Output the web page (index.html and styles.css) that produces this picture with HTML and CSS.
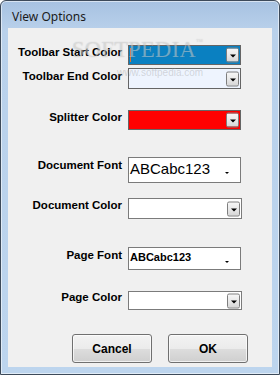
FILE: index.html
```html
<!DOCTYPE html>
<html lang="en">
<head>
  <meta charset="UTF-8">
  <meta name="viewport" content="width=device-width, initial-scale=1.0">
  <title>View Options</title>
  <link rel="stylesheet" href="styles.css">
</head>
<body>
  <div class="window">
    <div class="title">View Options</div>
    <div class="client">
      <div class="row row-1">
        <div class="label">Toolbar Start Color</div>
        <div class="combo color-combo start">
          <span class="caret"></span>
          <span class="drop-btn"><span class="arrow"></span></span>
        </div>
      </div>
      <div class="row row-2">
        <div class="label">Toolbar End Color</div>
        <div class="combo color-combo end">
          <span class="drop-btn"><span class="arrow"></span></span>
        </div>
      </div>
      <div class="row row-3">
        <div class="label">Splitter Color</div>
        <div class="combo color-combo splitter">
          <span class="drop-btn"><span class="arrow"></span></span>
        </div>
      </div>
      <div class="row row-4">
        <div class="label">Document Font</div>
        <div class="combo font-combo doc-font">
          <span class="font-sample">ABCabc123</span>
          <span class="flat-arrow"></span>
        </div>
      </div>
      <div class="row row-5">
        <div class="label">Document Color</div>
        <div class="combo color-combo plain">
          <span class="drop-btn"><span class="arrow"></span></span>
        </div>
      </div>
      <div class="row row-6">
        <div class="label">Page Font</div>
        <div class="combo font-combo page-font">
          <span class="font-sample">ABCabc123</span>
          <span class="flat-arrow"></span>
        </div>
      </div>
      <div class="row row-7">
        <div class="label">Page Color</div>
        <div class="combo color-combo plain short">
          <span class="drop-btn"><span class="arrow"></span></span>
        </div>
      </div>

      <div class="buttons">
        <button class="btn">Cancel</button>
        <button class="btn">OK</button>
      </div>

      <div class="watermark">SOFTPEDIA<span class="tm">™</span></div>
      <div class="watermark-url">www.softpedia.com</div>
    </div>
  </div>
</body>
</html>
```

FILE: styles.css
```css
body {
  margin: 0;
  background-color: #ffffff;
  font-family: "Liberation Sans", Arial, sans-serif;
}
.window {
  width: 280px;
  height: 375px;
  box-sizing: border-box;
  border: 1px solid #3d4a5a;
  border-radius: 6px 6px 0 0;
  padding: 0 7px 7px 7px;
  background: linear-gradient(to bottom, #a7c2e1 0px, #b9d1eb 30px, #bdd5ee 100%);
  box-shadow: inset 0 0 0 1px rgba(255, 255, 255, 0.55);
  display: flex;
  flex-direction: column;
}
.title {
  height: 27px;
  line-height: 32px;
  padding-left: 4px;
  font-family: "Noto Sans", "Open Sans", sans-serif;
  font-size: 12px;
  color: #1b1b1b;
}
.client {
  position: relative;
  flex: 1;
  background-color: #f0f0f0;
  padding-top: 17px;
  display: flex;
  flex-direction: column;
}
.row {
  display: flex;
  align-items: flex-start;
}
.row-2 { margin-top: 3px; }
.row-3 { margin-top: 21px; }
.row-4 { margin-top: 27px; }
.row-5 { margin-top: 15px; }
.row-6 { margin-top: 28px; }
.row-7 { margin-top: 21px; }
.label {
  width: 114px;
  text-align: right;
  font-weight: bold;
  font-size: 11.5px;
  line-height: 15px;
  color: #000;
  white-space: nowrap;
}
.row-2 .label, .row-4 .label, .row-6 .label { padding-top: 1px; }
.row-7 .label { margin-top: -1px; }
.combo {
  position: relative;
  margin-left: 6px;
  width: 113px;
  box-sizing: border-box;
  display: flex;
  align-items: center;
}
.color-combo {
  height: 20px;
  border: 1px solid #656565;
}
.color-combo.start { background-color: #0a80c1; }
.color-combo.end { background-color: #eef4fe; height: 21px; }
.color-combo.splitter { background-color: #ff0000; }
.color-combo.plain { background-color: #ffffff; border-color: #7b7b7b; height: 21px; width: 114px; }
.color-combo.short { height: 19px; }
.caret {
  position: absolute;
  left: 1px;
  top: 2px;
  width: 1px;
  height: 14px;
  background-color: #e0752c;
}
.drop-btn {
  position: absolute;
  right: 1px;
  top: 50%;
  transform: translateY(-50%);
  width: 13px;
  height: 15px;
  box-sizing: border-box;
  border: 1px solid #7e7e7e;
  border-radius: 2px;
  background: linear-gradient(to bottom, #f6f6f6 0%, #e9e9e9 50%, #d6d6d6 100%);
  display: flex;
  align-items: center;
  justify-content: center;
}
.arrow {
  margin-top: 2px;
  width: 0;
  height: 0;
  border-left: 3px solid transparent;
  border-right: 3px solid transparent;
  border-top: 3px solid #000;
}
.font-combo {
  background-color: #ffffff;
  border: 1px solid #7b7b7b;
}
.doc-font { height: 26px; }
.page-font { height: 23px; }
.font-sample {
  padding-left: 1px;
  color: #000;
  white-space: nowrap;
}
.doc-font .font-sample {
  font-size: 15px;
  line-height: 18px;
  margin-top: -3px;
}
.page-font .font-sample {
  font-size: 11px;
  font-weight: bold;
  line-height: 14px;
  margin-top: -4px;
}
.flat-arrow {
  position: absolute;
  right: 11px;
  top: 14px;
  width: 0;
  height: 0;
  border-left: 2px solid transparent;
  border-right: 2px solid transparent;
  border-top: 2px solid #000;
}
.page-font .flat-arrow { top: 13px; }
.buttons {
  margin-top: 24px;
  display: flex;
  justify-content: flex-end;
  gap: 16px;
  padding-right: 24px;
}
.btn {
  width: 80px;
  height: 29px;
  border: 1px solid #707070;
  border-radius: 3px;
  background: linear-gradient(to bottom, #f3f3f3 0%, #ebebeb 50%, #dddddd 51%, #cfcfcf 100%);
  box-shadow: inset 0 0 0 1px rgba(255, 255, 255, 0.7);
  font-family: "Liberation Sans", Arial, sans-serif;
  font-weight: bold;
  font-size: 12px;
  color: #000;
  padding: 0;
}
.watermark {
  position: absolute;
  left: 64px;
  top: 9px;
  font-family: "Liberation Serif", "Times New Roman", serif;
  font-size: 22.5px;
  line-height: 26px;
  letter-spacing: 0.3px;
  color: rgba(255, 255, 255, 0.38);
  text-shadow: 0 0 1px rgba(90, 90, 90, 0.35);
  pointer-events: none;
}
.tm {
  font-size: 7px;
  vertical-align: top;
  line-height: 10px;
}
.watermark-url {
  position: absolute;
  left: 109px;
  top: 39px;
  font-family: "Liberation Sans", Arial, sans-serif;
  font-size: 10px;
  line-height: 12px;
  color: rgba(150, 150, 150, 0.35);
  pointer-events: none;
}
```
